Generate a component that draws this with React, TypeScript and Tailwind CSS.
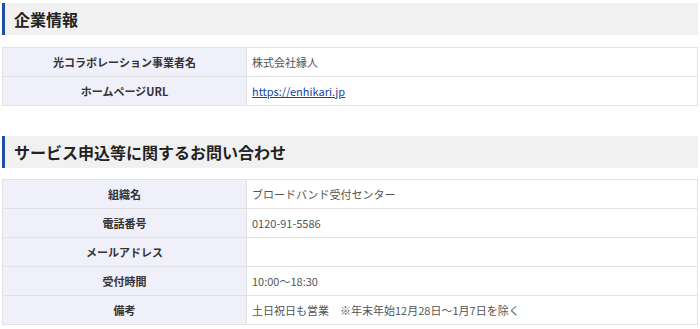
const font = { fontFamily: '"Noto Sans CJK JP", "Noto Sans", sans-serif' };

type Row = { label: string; value?: string; href?: string };

const company: Row[] = [
  { label: '光コラボレーション事業者名', value: '株式会社縁人' },
  { label: 'ホームページURL', value: 'https://enhikari.jp', href: 'https://enhikari.jp' },
];

const contact: Row[] = [
  { label: '組織名', value: 'ブロードバンド受付センター' },
  { label: '電話番号', value: '0120-91-5586' },
  { label: 'メールアドレス', value: '' },
  { label: '受付時間', value: '10:00～18:30' },
  { label: '備考', value: '土日祝日も営業　※年末年始12月28日～1月7日を除く' },
];

function Heading({ children }: { children: React.ReactNode }) {
  return (
    <h2 className="h-[32px] flex items-center bg-[#f1f1f1] border-l-[3px] border-[#1c4f9f] pl-[9px] text-[16px] font-bold text-[#222] leading-none">
      {children}
    </h2>
  );
}

function InfoTable({ rows }: { rows: Row[] }) {
  return (
    <table className="w-full border-collapse border border-[#e2e2e2] text-[11px]">
      <tbody>
        {rows.map(r => (
          <tr key={r.label} className="h-[29px]">
            <th className="w-[244px] bg-[#f0f0fb] border border-[#e2e2e2] font-bold text-[#333] text-center p-0">
              {r.label}
            </th>
            <td className="border border-[#e2e2e2] text-[#555] pl-[5px] py-0">
              {r.href ? (
                <a href={r.href} className="text-[#1a3f9c] underline">{r.value}</a>
              ) : (
                r.value
              )}
            </td>
          </tr>
        ))}
      </tbody>
    </table>
  );
}

export default function App() {
  return (
    <div className="w-[700px] h-[329px] bg-white px-[2px] pt-[3px] overflow-hidden" style={font}>
      <Heading>企業情報</Heading>
      <div className="mt-[12px]">
        <InfoTable rows={company} />
      </div>
      <div className="mt-[30px]">
        <Heading>サービス申込等に関するお問い合わせ</Heading>
      </div>
      <div className="mt-[11px]">
        <InfoTable rows={contact} />
      </div>
    </div>
  );
}
